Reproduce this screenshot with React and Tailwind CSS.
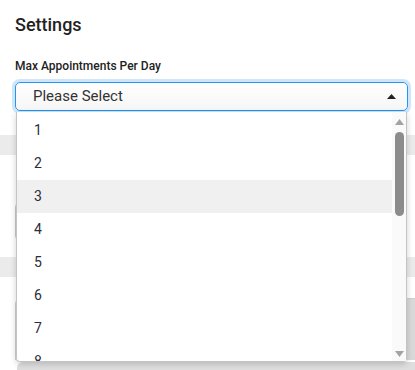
import React from 'react'

const options = ['1', '2', '3', '4', '5', '6', '7', '8']

const App = () => {
  return (
    <div className="relative h-[370px] w-[415px] overflow-hidden bg-white font-['Roboto',sans-serif] text-[#222]">
      <div className="px-[15px]">
        <h1 className="pt-[13px] text-[18px] leading-[24px] font-medium">Settings</h1>
        <div className="mt-[21px] text-[12px] leading-[16px] font-medium">Max Appointments Per Day</div>
        <div className="mt-[8px] flex h-[29px] w-[393px] items-center justify-between rounded-[5px] border border-[#2196f3] bg-gradient-to-b from-white to-[#f6f6f6] pl-[17px] pr-[11px] shadow-[0_0_0_3px_#cfe5f9]">
          <span className="text-[15px] text-[#333]">Please Select</span>
          <svg width="9" height="5" viewBox="0 0 9 5">
            <path d="M4.5 0 L9 5 L0 5 Z" fill="#222" />
          </svg>
        </div>
      </div>

      {/* content behind the open list */}
      <div className="mt-[24px] h-[20px] bg-[#ebebeb]" />
      <div className="mx-[15px] mt-[48px] h-[37px] rounded-[4px] border border-[#c8c8c8]" />
      <div className="mt-[17px] h-[20px] bg-[#ebebeb]" />
      <div className="ml-[15px] mt-[21px] h-[62px] rounded-tl-[6px] border-l border-t border-[#d0d0d0] bg-gradient-to-r from-white from-[96%] to-[#d9d9d9] to-[96%]" />
      <div className="ml-[17px] mt-[2px] h-[10px] rounded-tl-[6px] bg-[#dedede]" />

      <div className="absolute left-[16px] top-[112px] flex h-[250px] w-[391px] rounded-b-[4px] border border-t-0 border-[#c4c4c4] bg-white shadow-[0_2px_6px_rgba(0,0,0,0.18)]">
        <ul className="flex-1 overflow-hidden pt-[2px]">
          {options.map((o) => (
            <li
              key={o}
              className={`flex h-[33px] items-center pl-[17px] text-[14px] text-[#2b2d3a] ${o === '3' ? 'bg-[#f0f0f0]' : ''}`}
            >
              {o}
            </li>
          ))}
        </ul>
        <div className="flex w-[14px] flex-col bg-[#fafafa] pl-[3px]">
          <svg className="mt-[7px]" width="9" height="6" viewBox="0 0 9 6">
            <path d="M4.5 0 L9 6 L0 6 Z" fill="#a3a3a3" />
          </svg>
          <div className="mt-[7px] h-[84px] w-[9px] rounded-full bg-[#8c8c8c]" />
          <svg className="mb-[4px] mt-auto" width="9" height="6" viewBox="0 0 9 6">
            <path d="M0 0 L9 0 L4.5 6 Z" fill="#a3a3a3" />
          </svg>
        </div>
      </div>
    </div>
  )
}

export default App
